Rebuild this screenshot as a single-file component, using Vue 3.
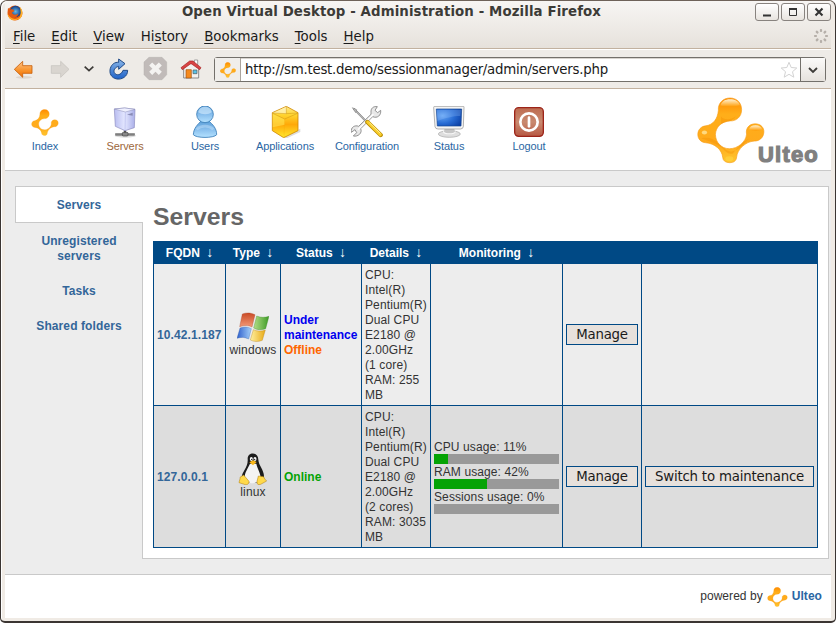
<script setup>
const menus = ['File', 'Edit', 'View', 'History', 'Bookmarks', 'Tools', 'Help']
const hotkeys = [0, 0, 0, 2, 0, 0, 0]
const columns = ['FQDN', 'Type', 'Status', 'Details', 'Monitoring', '', '']
const side = ['Unregistered servers', 'Tasks', 'Shared folders']
const servers = [
  {
    name: '10.42.1.187', type: 'windows',
    status: [{ text: 'Under maintenance', kind: 'maintenance' }, { text: 'Offline', kind: 'offline' }],
    details: 'CPU: Intel(R) Pentium(R) Dual CPU E2180 @ 2.00GHz', cores: '(1 core)', ram: 'RAM: 255 MB',
    usage: [], action: ''
  },
  {
    name: '127.0.0.1', type: 'linux',
    status: [{ text: 'Online', kind: 'online' }],
    details: 'CPU: Intel(R) Pentium(R) Dual CPU E2180 @ 2.00GHz', cores: '(2 cores)', ram: 'RAM: 3035 MB',
    usage: [{ label: 'CPU', value: 11 }, { label: 'RAM', value: 42 }, { label: 'Sessions', value: 0 }],
    action: 'Switch to maintenance'
  }
]
</script>

<template>
  <div class="window">
    <svg class="defs" width="0" height="0">
      <defs>
        <linearGradient id="amber" x1="0" y1="0" x2="0" y2="1">
          <stop offset="0" stop-color="#ff8a00" /><stop offset=".25" stop-color="#ffae19" />
          <stop offset=".7" stop-color="#ffaa1c" /><stop offset="1" stop-color="#ffc62e" />
        </linearGradient>
        <linearGradient id="shine" x1="0" y1="0" x2="0" y2="1">
          <stop offset="0" stop-color="#fff1cf" /><stop offset="1" stop-color="#ff9d08" />
        </linearGradient>
      </defs>
      <symbol id="mark" viewBox="50 18 204 202">
        <path fill="url(#amber)" stroke="#f8a01c" stroke-width="2" d="M114 58C112 37 128 21 149 21C170 21 184 36 184 56C184 78 168 91 150 90C124 91 106 108 105 131C106 155 121 173 147 174C172 174 197 154 199 130C195 112 208 98 226 99C242 99 252 111 251 124C250 142 236 151 222 151C196 152 171 176 169 199C168 211 160 216 148 216C136 216 128 211 127 200C125 177 103 158 76 156C61 155 52 144 52 131C52 117 62 106 76 105C98 102 112 84 114 58Z" />
      </symbol>
      <symbol id="markGloss" viewBox="50 18 204 202">
        <path fill="url(#shine)" d="M120 44C124 31 134 25 149 25C164 25 175 31 179 43C163 48 135 49 120 44Z" />
        <path fill="url(#shine)" d="M206 116C208 107 215 103 226 103C237 103 244 108 246 116C235 121 216 120 206 116Z" />
        <path fill="#f28b00" opacity=".35" d="M62 142C84 138 102 144 116 158C130 172 141 183 154 182C175 180 193 157 205 145C190 151 172 170 158 188C145 193 135 184 126 172C105 156 83 151 62 142ZM122 77C130 88 153 87 167 76C158 92 135 92 122 100Z" />
        <ellipse cx="72" cy="125" rx="8" ry="6" fill="#ffe090" opacity=".85" />
        <ellipse cx="147" cy="204" rx="12" ry="7" fill="#ffe04d" opacity=".4" />
      </symbol>
    </svg>

    <header class="titlebar">
      <svg class="fox" width="16" height="16" viewBox="0 0 32 32">
        <defs><radialGradient id="globe"><stop offset="0" stop-color="#64b9e8" /><stop offset="1" stop-color="#123a82" /></radialGradient></defs>
        <circle cx="16" cy="16" r="15" fill="#e8590c" />
        <circle cx="17" cy="13" r="11.5" fill="url(#globe)" />
        <path fill="#ffb52b" d="M25 3C34 11 32 25 22 30C28 22 29 13 25 3Z" />
        <path fill="#e35b12" d="M2 6L7 9C10 8 13 9 15 12L10 15C11 20 17 21 23 17C21 26 11 28 5 22C1 17 1 11 2 6Z" />
        <path fill="#ffa928" d="M1 17C7 29 18 31 27 23C22 34 3 34 1 17Z" />
      </svg>
      <h1 class="title">Open Virtual Desktop - Administration - Mozilla Firefox</h1>
      <div class="controls">
        <button class="control"><svg width="22" height="16"><path d="M7 11.5H15" stroke="#333" stroke-width="2" /></svg></button>
        <button class="control"><svg width="22" height="16"><path d="M7.5 5V11.5H14.5V5Z" fill="none" stroke="#333" /><path d="M7 5H15" stroke="#333" stroke-width="2" /></svg></button>
        <button class="control"><svg width="22" height="16"><path d="M7.5 4.5L14.5 11.5M14.5 4.5L7.5 11.5" stroke="#333" stroke-width="2.1" /></svg></button>
      </div>
    </header>

    <nav class="menubar">
      <span v-for="(m, i) in menus" :key="m" class="menu">{{ m.slice(0, hotkeys[i]) }}<u>{{ m[hotkeys[i]] }}</u>{{ m.slice(hotkeys[i] + 1) }}</span>
      <svg class="throbber" width="16" height="16" viewBox="-8 -8 16 16">
        <rect v-for="n in 8" :key="n" x="-1.1" y="-7" width="2.2" height="3" rx=".8" fill="#b5afa9" :transform="`rotate(${n * 45})`" />
      </svg>
    </nav>

    <div class="toolbar">
      <svg width="22" height="28" viewBox="36 165 66 84">
        <defs><linearGradient id="back" x1="0" y1="0" x2="0" y2="1"><stop offset="0" stop-color="#ffc48a" /><stop offset=".55" stop-color="#f8942e" /><stop offset="1" stop-color="#f06c00" /></linearGradient></defs>
        <ellipse cx="72" cy="232" rx="25" ry="4" fill="#ddd6ce" />
        <path d="M43 208L68 184V197H96V220H68V232Z" fill="url(#back)" stroke="#c8600c" stroke-width="2.5" stroke-linejoin="round" />
      </svg>
      <svg width="22" height="28" viewBox="147 165 66 84">
        <path d="M207 208L182 184V197H154V220H182V232Z" fill="#d9d5d0" stroke="#c9c5c0" stroke-width="2.5" stroke-linejoin="round" />
      </svg>
      <svg width="18" height="28" viewBox="240 165 54 84"><path d="M254 200L267 212L280 200" fill="none" stroke="#3d3b38" stroke-width="5" /></svg>
      <svg width="26" height="28" viewBox="318 165 78 84">
        <defs><linearGradient id="reload" x1="0" y1="0" x2="0" y2="1"><stop offset="0" stop-color="#8db8e8" /><stop offset="1" stop-color="#1e62c8" /></linearGradient></defs>
        <path d="M356 177L375 191L356 208V199C344 202 340 211 343 218C348 228 364 226 369 211H383C383 230 366 239 351 237C333 234 327 219 331 205C335 192 345 186 356 187Z" fill="url(#reload)" stroke="#204a87" stroke-width="3" stroke-linejoin="round" />
      </svg>
      <svg width="26" height="28" viewBox="426 165 78 84">
        <path d="M447 172H486L500 186V224L486 239H447L432 224V186Z" fill="#c1bbb9" stroke="#b5b0ae" stroke-width="1.5" />
        <path d="M452 192L481 220M481 192L452 220" stroke="#f4f3f1" stroke-width="13" />
      </svg>
      <svg width="26" height="28" viewBox="534 165 78 84">
        <path d="M583 180H593V198H583Z" fill="#fff" stroke="#777" stroke-width="2" />
        <path d="M551 201L573 184L596 202V234H551Z" fill="#f3f2f0" stroke="#777" stroke-width="2.5" />
        <path d="M543 203L569 183H579L603 203L599 209L575 192H571L547 209Z" fill="#d94545" stroke="#a52020" stroke-width="2" />
        <path d="M558 209H574V234H558Z" fill="#f58a1e" stroke="#a05010" stroke-width="2" />
        <path d="M579 210H591V221H579Z" fill="#57c3e8" stroke="#555" stroke-width="2" />
      </svg>
      <div class="address">
        <span class="favicon"><svg width="16" height="16"><use href="#mark" /></svg></span>
        <span class="url">http://sm.test.demo/sessionmanager/admin/servers.php</span>
        <svg class="star" width="18" height="18" viewBox="0 0 18 18"><path d="M9 1.3L11.2 6.5L16.8 7L12.5 10.7L13.8 16.2L9 13.3L4.2 16.2L5.5 10.7L1.2 7L6.8 6.5Z" fill="#fff" stroke="#d2d2d2" /></svg>
        <span class="drop"><svg width="12" height="8"><path d="M2 2L6 6L10 2" fill="none" stroke="#3d3b38" stroke-width="1.8" /></svg></span>
      </div>
    </div>

    <main class="page">
      <div class="banner">
        <div class="apps">
          <a class="app"><span class="pic"><svg width="28" height="27"><use href="#mark" /></svg></span>Index</a>
          <a class="app current"><span class="pic"><svg width="32" height="32" viewBox="327 48 96 96">
            <defs><linearGradient id="cube"><stop offset="0" stop-color="#b9bdf0" /><stop offset=".5" stop-color="#e4e7ff" /><stop offset="1" stop-color="#a9aee8" /></linearGradient></defs>
            <ellipse cx="376" cy="137" rx="32" ry="6" fill="#ddd" />
            <path d="M346 133H404M375 115V133" stroke="#555" stroke-width="7" /><path d="M348 132H402" stroke="#bbb" stroke-width="2.5" />
            <rect x="367" y="127" width="17" height="11" rx="3" fill="#888" stroke="#444" stroke-width="2" />
            <path d="M343 57L374 54L405 58L403 113L375 122L346 109Z" fill="url(#cube)" stroke="#8c8dbf" stroke-width="2" />
            <path d="M343 57L374 54L405 58L376 66Z" fill="#f0f1ff" stroke="#888ab5" stroke-width="1.5" />
            <path d="M376 66L375 121" stroke="#b3b8ea" stroke-width="2" /><path d="M381 74L398 68V77Z" fill="#888bb5" />
          </svg></span>Servers</a>
          <a class="app"><span class="pic"><svg width="32" height="32" viewBox="567 48 96 96">
            <defs><linearGradient id="person" x1="0" y1="0" x2="0" y2="1"><stop offset="0" stop-color="#5a9fd9" /><stop offset=".5" stop-color="#86bdec" /><stop offset="1" stop-color="#b5e2ff" /></linearGradient></defs>
            <path d="M580 134C581 114 593 104 604 92H626C638 104 650 114 650 134C642 145 588 145 580 134Z" fill="url(#person)" stroke="#377bb6" stroke-width="2.5" />
            <circle cx="615" cy="73" r="25" fill="url(#person)" stroke="#377bb6" stroke-width="2.5" />
            <path d="M595 67C597 45 633 45 635 67C627 75 604 75 595 67Z" fill="#d9efff" opacity=".6" />
            <path d="M590 118C603 105 627 105 640 118" fill="none" stroke="#d9efff" stroke-width="8" opacity=".35" />
          </svg></span>Users</a>
          <a class="app"><span class="pic"><svg width="32" height="32" viewBox="87 48 96 96">
            <defs><linearGradient id="gold" x1="0" y1="0" x2="0" y2="1"><stop offset="0" stop-color="#ffe98a" /><stop offset=".28" stop-color="#ffd42e" /><stop offset=".58" stop-color="#ffa808" /><stop offset="1" stop-color="#ffea2e" /></linearGradient></defs>
            <path d="M125 140L140 145L181 126V116Z" fill="#ddd" />
            <path d="M139 49L174 68V122L131 143L97 122V68Z" fill="url(#gold)" stroke="#d08a06" stroke-width="2.5" stroke-linejoin="round" />
            <path d="M98 69L139 50V71Z" fill="#fff4bd" opacity=".75" />
            <path d="M98 70L134 87V104L98 112Z" fill="#ffe552" opacity=".6" />
            <path d="M98 69L139 71L173 69M139 50V71M98 70L134 87L173 70" fill="none" stroke="#c88e10" stroke-width="1.8" opacity=".75" />
            <path d="M134 87L132 141" stroke="#f2a000" stroke-width="1.5" opacity=".45" />
          </svg></span>Applications</a>
          <a class="app"><span class="pic"><svg width="32" height="32" viewBox="333 48 96 96">
            <path d="M341 56L382 98" stroke="#777" stroke-width="6" /><path d="M341 57L382 98" stroke="#e5e5e5" stroke-width="2.5" />
            <path d="M337 53L350 59L347 68Z" fill="#bbb" stroke="#777" stroke-width="1.5" />
            <path d="M393 67C392 55 400 48 412 50L405 61L413 68L422 61C424 76 412 86 398 80L362 116C368 129 354 141 340 138L350 128L345 119L334 127C331 112 345 104 356 109L393 73Z" fill="#e8e8e8" stroke="#808080" stroke-width="2.5" stroke-linejoin="round" />
            <path d="M354 119L400 73" stroke="#fff" stroke-width="4" />
            <path d="M382 96L422 135" stroke="#b98a00" stroke-width="13" stroke-linecap="round" /><path d="M383 96L421 134" stroke="#f7cc29" stroke-width="9" stroke-linecap="round" /><path d="M388 98L421 130" stroke="#fff092" stroke-width="3" />
          </svg></span>Configuration</a>
          <a class="app"><span class="pic"><svg width="32" height="32" viewBox="579 48 96 96">
            <defs><radialGradient id="screen" cx=".25" cy=".4" r=".9"><stop offset="0" stop-color="#66a6f4" /><stop offset=".5" stop-color="#286cd4" /><stop offset="1" stop-color="#073a9f" /></radialGradient></defs>
            <ellipse cx="628" cy="132" rx="33" ry="10" fill="#dedede" stroke="#a5a5a5" stroke-width="2" />
            <ellipse cx="628" cy="126" rx="19" ry="7" fill="#f8f8f8" /><path d="M614 113H642L645 125C639 131 618 131 612 125Z" fill="#c6c6c6" />
            <path d="M584 49H670Q673 49 672 53L670 110Q669 117 661 117H594Q586 117 585 110L581 53Q581 49 584 49Z" fill="#f4f4f4" stroke="#909090" stroke-width="2" />
            <path d="M589 57H665L663 108H592Z" fill="url(#screen)" stroke="#134692" stroke-width="2" />
            <path d="M590 59H663L661 78C641 78 614 84 592 93Z" fill="#a5caff" opacity=".25" />
          </svg></span>Status</a>
          <a class="app"><span class="pic"><svg width="32" height="32" viewBox="819 48 96 96">
            <defs><linearGradient id="off" x1="0" y1="0" x2="0" y2="1"><stop offset="0" stop-color="#bd6b50" /><stop offset=".5" stop-color="#c98a70" /><stop offset="1" stop-color="#b75843" /></linearGradient></defs>
            <rect x="824" y="53" width="86" height="86" rx="12" fill="url(#off)" stroke="#9c2419" stroke-width="4" />
            <circle cx="867" cy="96" r="26" fill="none" stroke="#fff" stroke-width="8" /><path d="M867 83V109" stroke="#fff" stroke-width="8" stroke-linecap="round" />
          </svg></span>Logout</a>
        </div>
        <div class="brand">
          <div class="brand-mark"><svg width="68" height="67"><use href="#mark" /><use href="#markGloss" /></svg></div>
          <span class="brand-name">Ulteo</span>
        </div>
      </div>

      <div class="body">
        <aside class="side">
          <a class="tab active">Servers</a>
          <div class="tabs"><a v-for="s in side" :key="s" class="tab">{{ s }}</a></div>
        </aside>
        <section class="panel">
          <h2 class="heading">Servers</h2>
          <table class="grid">
            <colgroup><col class="c1" /><col class="c2" /><col class="c3" /><col class="c4" /><col class="c5" /><col class="c6" /><col class="c7" /></colgroup>
            <thead><tr><th v-for="(c, i) in columns" :key="i"><template v-if="c">{{ c }} <span class="arrow">↓</span></template></th></tr></thead>
            <tbody>
              <tr v-for="s in servers" :key="s.name">
                <td class="fqdn">{{ s.name }}</td>
                <td class="type">
                  <svg v-if="s.type === 'windows'" width="32" height="32" viewBox="261 228 96 96">
                    <defs>
                      <linearGradient id="wr" x1="0" y1="0" x2="0" y2="1"><stop offset="0" stop-color="#c94a25" /><stop offset="1" stop-color="#f39a78" /></linearGradient>
                      <linearGradient id="wg"><stop offset="0" stop-color="#b3dd87" /><stop offset="1" stop-color="#3d9b25" /></linearGradient>
                      <linearGradient id="wb"><stop offset="0" stop-color="#2e5fcc" /><stop offset="1" stop-color="#a5d1fa" /></linearGradient>
                      <linearGradient id="wy"><stop offset="0" stop-color="#fff0a0" /><stop offset="1" stop-color="#e8a915" /></linearGradient>
                    </defs>
                    <path d="M277 237C290 232 303 233 315 239L306 276C295 270 283 270 269 275Z" fill="url(#wr)" stroke="#a63d20" />
                    <path d="M320 243C333 248 344 248 357 244L347 281C335 286 322 285 311 279Z" fill="url(#wg)" stroke="#3c862a" />
                    <path d="M270 279C282 274 294 275 304 281L296 312C284 306 273 306 261 310Z" fill="url(#wb)" stroke="#3b62a8" />
                    <path d="M310 284C322 289 334 290 346 285L337 316C325 321 312 321 301 315Z" fill="url(#wy)" stroke="#b17a10" />
                  </svg>
                  <svg v-else width="32" height="32" viewBox="261 156 96 96">
                    <path d="M293 174C292 152 325 151 325 176C326 194 343 207 342 228C341 250 276 254 275 228C276 212 295 199 293 174Z" fill="#1c1c1c" />
                    <path d="M300 188C293 204 283 215 284 233C288 250 325 251 331 235C335 220 322 205 319 188Z" fill="#f4f4f4" />
                    <ellipse cx="304" cy="174" rx="4.5" ry="6" fill="#fff" /><ellipse cx="315" cy="174" rx="4.5" ry="6" fill="#fff" />
                    <circle cx="305" cy="175" r="2" /><circle cx="314" cy="175" r="2" />
                    <path d="M298 184L309 178L320 183L309 193Z" fill="#fbb91b" />
                    <path d="M281 222L297 241C298 251 288 253 280 249L267 245C268 238 271 235 270 229Z" fill="#ffd94a" stroke="#ad7b0c" stroke-width="1.5" />
                    <path d="M325 225L341 227C343 233 346 236 350 240L332 250C324 253 320 249 321 241Z" fill="#ffd94a" stroke="#ad7b0c" stroke-width="1.5" />
                  </svg>
                  <div>{{ s.type }}</div>
                </td>
                <td class="status"><div v-for="t in s.status" :key="t.text" :class="t.kind">{{ t.text }}</div></td>
                <td class="details">{{ s.details }}<br />{{ s.cores }}<br />{{ s.ram }}</td>
                <td>
                  <div v-for="u in s.usage" :key="u.label">
                    <div class="usage">{{ u.label }} usage: {{ u.value }}%</div>
                    <div class="meter"><div class="fill" :style="{ width: u.value + '%' }"></div></div>
                  </div>
                </td>
                <td><button class="btn">Manage</button></td>
                <td><button v-if="s.action" class="btn">{{ s.action }}</button></td>
              </tr>
            </tbody>
          </table>
        </section>
      </div>

      <footer class="footer">powered by <svg width="21" height="20"><use href="#mark" /></svg> <b>Ulteo</b></footer>
    </main>
  </div>
</template>

<style>
body { margin: 0; background: #fff; overflow: hidden; }
</style>

<style scoped>
* { box-sizing: border-box; }
.window { width: 836px; height: 623px; display: flex; flex-direction: column; padding: 0 4px 3px; overflow: hidden; border: 1px solid #3b3532; border-top-color: #6e6259; border-bottom-width: 2px; border-radius: 7px 7px 5px 5px; background: #f0ebe5; box-shadow: inset 1px 1px #fff; font-family: "DejaVu Sans", sans-serif; font-size: 13.33px; color: #1a1a1a; }
.defs { position: absolute; }
.titlebar { height: 23px; flex: none; display: grid; grid-template-columns: 76px 1fr 76px; align-items: center; background: linear-gradient(#f7f5f3, #efece8); }
.fox { margin-left: 2px; }
.title { margin: 0; font-size: 13.33px; line-height: 20px; letter-spacing: .11px; text-align: center; white-space: nowrap; color: #3c3b37; padding: 0 53px 2px 0; }
.controls { display: flex; gap: 2px; align-self: start; padding-top: 2px; }
.control { width: 24px; height: 18px; padding: 0; border: 1px solid #88837f; border-radius: 3px; background: linear-gradient(#fff, #e8e4df); }
.control svg { display: block; }
.menubar { height: 25px; flex: none; display: flex; gap: 16px; padding: 0 2px 0 8px; line-height: 24px; background: linear-gradient(#efece8, #e6e1db); border-bottom: 1px solid #c2b19f; }
.menu { padding-top: 1px; }
.menu u { text-underline-offset: 2px; }
.throbber { margin: 4px 0 0 auto; }
.toolbar { height: 40px; flex: none; display: grid; grid-template-columns: 37px 31px 26px 36px 36px 36px 1fr; align-items: start; padding: 6px 5px 0 7px; border-bottom: 1px solid #c2b19f; background: #eeebe7; box-shadow: inset 0 1px #fff; }
.toolbar > svg { display: block; }
.address { display: flex; height: 25px; margin-top: 2px; border: 1px solid #73706b; border-radius: 3px; background: #fff; align-items: center; box-shadow: inset 0 1px #d8d4cf; }
.favicon { width: 26px; height: 100%; display: grid; place-items: center; background: #f0eeeb; border-right: 1px solid #aaa49d; }
.favicon svg, .pic svg { display: block; }
.url { flex: 1; padding-left: 4px; white-space: nowrap; letter-spacing: -.25px; }
.star { margin-right: 2px; }
.drop { width: 25px; height: 100%; display: grid; place-items: center; border-left: 1px solid #73706b; background: linear-gradient(#fbfaf9, #e6e2dd); }
.page { flex: 1; min-height: 0; display: flex; flex-direction: column; background: #ededed; font-family: "Liberation Sans", Arial, sans-serif; font-size: 12px; line-height: 15px; color: #333; }
.banner { height: 82px; flex: none; display: flex; justify-content: space-between; background: #fff; border-bottom: 1px solid #c9c9c9; }
.apps { display: grid; grid-template-columns: repeat(4, 80px) 84px 80px 80px; padding-top: 17px; }
.app { display: flex; flex-direction: column; align-items: center; font-size: 11px; letter-spacing: -.1px; color: #2a66a3; }
.app.current { color: #9c673c; }
.pic { width: 32px; height: 32px; display: grid; place-items: center; margin-bottom: 1px; }
.brand { display: flex; align-items: flex-end; padding: 0 12px 6px 0; }
.brand-mark svg { display: block; }
.brand-name { margin: 0 0 -2px -7px; font-size: 22px; line-height: 22px; font-weight: 700; letter-spacing: 1.2px; color: #808080; -webkit-text-stroke: 1.2px #808080; }
.body { height: 403px; flex: none; display: flex; padding: 15px 2px 15px 10px; }
.side { width: 128px; margin-right: -1px; position: relative; display: flex; flex-direction: column; font-weight: 700; letter-spacing: .1px; color: #336699; text-align: center; }
.tab.active { height: 37px; padding: 11px 1px 0 0; background: #fff; border: 1px solid #c9c9c9; border-right: 0; }
.tabs { display: flex; flex-direction: column; gap: 20px; padding: 11px 20px 0 20px; }
.tabs .tab { margin: 0 -5px; padding: 0 5px; }
.tabs .tab:first-child { padding: 0 8px; }
.panel { flex: 1; border: 1px solid #c9c9c9; background: #fff; padding: 16px 10px 0; }
.heading { margin: 0 0 10px; font-size: 24.8px; line-height: 28px; color: #666; }
.grid { width: 665px; table-layout: fixed; border-collapse: separate; border-spacing: 1px; background: #004985; }
.c1 { width: 71px; } .c2 { width: 54px; } .c3 { width: 80px; } .c4 { width: 68px; } .c5 { width: 131px; } .c6 { width: 78px; } .c7 { width: 175px; }
th { height: 21px; padding: 2px 0 0; color: #fff; white-space: nowrap; vertical-align: middle; }
.arrow { margin-left: 3px; font-family: "Liberation Serif", serif; font-size: 14px; font-weight: 400; line-height: 1; }
td { height: 141px; padding: 3px; vertical-align: middle; background: #ededed; white-space: nowrap; }
.details { padding: 4px 0 2px 3px; white-space: normal; letter-spacing: .12px; }
tbody tr:nth-child(2) td { background: #ddd; }
.fqdn { padding: 4px 3px 2px; font-weight: 700; color: #336699; letter-spacing: .1px; }
.type { text-align: center; padding: 3px 0; letter-spacing: .15px; }
.type svg { display: block; margin: 0 auto; }
.status { padding: 4px 3px 2px; font-weight: 700; white-space: normal; }
.maintenance { color: #0000f0; }
.offline { color: #ff6600; }
.online { color: #05a305; }
.usage { height: 15px; padding-top: 1px; letter-spacing: .1px; }
.meter { height: 10px; background: #999; }
.fill { height: 10px; background: #05a305; }
.btn { display: block; width: 100%; height: 21px; padding: 0; border: 1px solid #004985; background: #e7e1dc; font: 13.33px/17px "DejaVu Sans", sans-serif; letter-spacing: -.2px; color: #1a1a1a; }
.footer { flex: 1; display: flex; align-items: center; justify-content: flex-end; gap: 4px; padding-right: 9px; letter-spacing: .05px; background: #fff; border-top: 1px solid #c9c9c9; }
.footer b { color: #2a66a3; }
</style>
